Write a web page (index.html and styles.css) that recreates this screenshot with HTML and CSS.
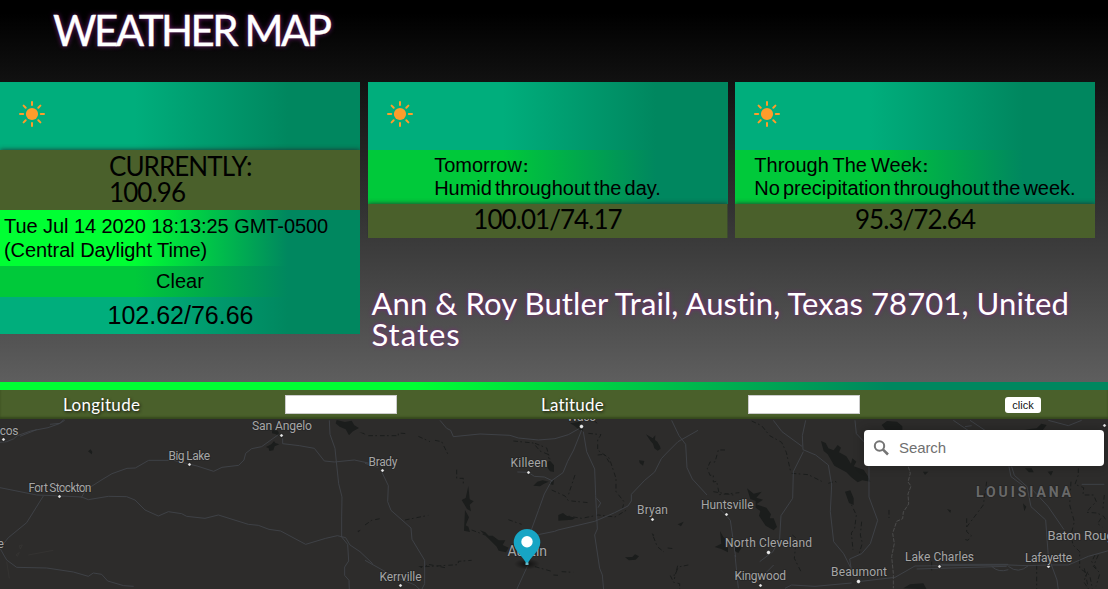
FILE: index.html
```html
<!DOCTYPE html>
<html lang="en">
<head>
<meta charset="utf-8">
<title>Weather Map</title>
<link rel="stylesheet" href="styles.css">
</head>
<body>
<svg width="0" height="0" class="defs">
  <symbol id="sun" viewBox="0 0 26 26">
    <circle cx="13" cy="13" r="6.1" fill="#ff9c2b"/>
    <path d="M13 1v3M13 22v3M1 13h3.2M21.800 13H25M4.600 4.600l2.100 2.100M19.300 19.300l2.100 2.100M21.400 4.600l-2.100 2.100M6.700 19.300l-2.100 2.100" stroke="#ff9c2b" stroke-width="2" stroke-linecap="round"/>
  </symbol>
</svg>
<header class="title-bar"><h1>WEATHER MAP</h1></header>
<main class="forecast">
  <section class="card current">
    <div class="icon-row"><svg class="sun"><use href="#sun"/></svg></div>
    <div class="olive now"><p><span class="now-label">CURRENTLY:</span><br><span class="now-temp">100.96</span></p></div>
    <div class="date">Tue Jul 14 2020 18:13:25 GMT-0500 (Central Daylight Time)</div>
    <div class="summary">Clear</div>
    <div class="range">102.62/76.66</div>
  </section>
  <section class="card">
    <div class="icon-row"><svg class="sun"><use href="#sun"/></svg></div>
    <div class="outlook"><p>Tomorrow<span class="colon">:</span><br><span class="line">Humid throughout the day.</span></p></div>
    <div class="olive temps">100.01/74.17</div>
  </section>
  <section class="card">
    <div class="icon-row"><svg class="sun"><use href="#sun"/></svg></div>
    <div class="outlook"><p>Through The Week<span class="colon">:</span><br><span class="line">No precipitation throughout the week.</span></p></div>
    <div class="olive temps">95.3/72.64</div>
  </section>
  <h2 class="address"><span class="addr1">Ann &amp; Roy Butler Trail, Austin, Texas 78701, United</span> <span class="addr2">States</span></h2>
</main>
<div class="stripe"></div>
<form class="coords">
  <label class="lon" for="lon">Longitude</label><input id="lon" type="text">
  <label class="lat" for="lat">Latitude</label><input id="lat" type="text">
  <button type="button">click</button>
</form>
<div class="map">
  <svg class="tiles" viewBox="0 419 1108 170">
    <g transform="translate(0 375) scale(.33333)">
      <g class="water">
        <path d="M1010 135l25 6 20-4 8 14 14 8-18 10-12 12-10-18-18-8-12-10zM1078 172l14 2 4 5zM816 166l12-3 8 8 0 12-10-6-10-2zM798 216l16-8 8-10 4 6 12 4-14 6-4 12-12 2-2-8zM264 229l8-6 5 8-2 7zM1072 468l10-4-6 8z"/>
      </g>
      <g class="road">
        <path d="M0 202l20-2 20-8 12-10 40-14 52-10 34-12 16-10M60 184l50-20M150 148l30-3 12-12M0 338l60 12 50 10 75 3 60 3 20 8 60-10 55 1 25 10 30 30 40 18 30-13 40 6 15 8 55 6 40-10 90 28 30 3 32 12 35 5 75 40 60-18 35-8 25 6 13 22 30 20 38 36M244 368l12-22 50-32 30-18 45-16 25-1 40-23 75 0 70 17 50 16 25-12 50-6 16-16 5-20 18-14 30-6 50-36M848 190l0 16 50 6 45 8 30 38 30 3 60-6 46 10M988 136l2 42 15 42 4 40 7 66 10 40-1 60 0 60 18 22 3 50-12 18 0 25 13 15 2 60M130 363l-50 80-55 45-25 32 20 35 30 22 90 2 80 12 45 13 15-10 25 4 18 20 48 14 30 2"/>
      </g>
      <path class="faint" d="M20 560l8 50M58 512l9-2-6 12zM48 540l10-8-6 12zM85 540l75-14"/>
    </g>
    <g transform="translate(365 375) scale(.33333)">
      <g class="water">
        <path d="M615 145l30-5 12 14-5 14-12-6-12-10zM843 178l14 8 6 4 8-9-1 14 7 5 8 14 2 7-9 6-10-7-4-14-8-9zM822 256l16 2-4 14-10-8zM545 262l10-5 12 14 0 20-12-2-7-10zM505 332l12-12 16-4 18 4-14 6-12 8zM552 326l15-12-2 16zM290 375l12-6 8-36 4 40 12 6-12 10 4 20-12-7-7-12zM300 405l12 22-10 24 8 4 5 16-18-4zM345 466l16 6 10 10 12 0 18 14 20 0-8 14 18 8-8 14-22-5-6-12-24-24zM580 420l14-6 10 8 28 6-10 6-42 3zM780 547l22-1 8-8 12 6-10 10-20 2zM938 448l18-8-8 14zM1065 468l10 18 14 12 0 34-20-10-20-6 20-10zM160 574l14-1-4 6zM860 474l8 6-4 4z"/>
      </g>
      <path class="creek" d="M10 182l70 0 20 0 0-8 25 2M160 184l35 16M210 196l20 4 10 20 10 20M275 284l0 26 20 0 0 20M0 450l20-14 30-6M120 435l70-14M445 198l60 6 20 24 24 10 6 28M510 205l35 14 10 34M560 345l40 18 10 14 60 6M590 420l60 10 50-10 50 6 40-24M686 136l12 10M670 175l38 4-10 16 0 30 35 25 20 60 0 40 24 30-4 20M698 240l20-2 15 24M1080 225l-20 0-10 36-15 0-8 20 8 20 10 0 0 20 10-2 8 40 60-6M1045 350l60 10M240 578l-50-10-10 6M320 465l40 15M180 575l100-6 0-10 40-3M865 485l12 30 20 16M908 519l18 2M510 575l50 14M590 590l35 2M565 600l16 1M938 572l-10 40M970 570l-30 6-10 24-14 2 10 20 18 4 0 18M430 434l40 14M630 300l-20 60"/>
      <g class="road">
        <path d="M225 136l20 24 12 6 8 19 80-8 90 4 25 8 60 6 50-4 40-12 32-18M650 165l-24 60-18 34-14 34-34 24-22 40-18 50-20 55 0 40M655 170l10 60 24 52 3 80 5 100-8 18 15 100 8 20 4 46M457 291l33 1 18 12 30 2 25 12M500 490l24-12 45-9 10-4 110-26 60-26 40-20 10-15 0-20 40-42 30-25 20-40 16-17 34-34 60-34M920 136l22 46 20 26 4 70 16 34 44 48M1050 388l34 34 12 14 16 110M50 290l20 42-2 48 10 26 60 53 3 34 38 63 0 70-9 18M0 556l90 50 60 24 15 14M488 572l-33 72M695 370l12 14-8 14M0 265l40 12"/>
      </g>
    </g>
    <g transform="translate(735 375) scale(.33333)">
      <g class="water">
        <path d="M258 198l14 6 8 16 16 6 12-16 10 8-6 14 22 12 14 22 4-16 12 10-8 14 30 10 12 18 8 18-24-4-14 6-20-16-14-14-36-20-20-34-12-10zM440 150l16-12 30 2 16 14 0 12-50 0zM865 166l20-4 20-2 14-14 16 4-12 16zM36 340l20 16 24-6-16 18 20 6-20 14 30 10 14 20-4 12 12 0 10 26-10 10-24-14-20-30 4-14-14-10 0-20-16-6zM330 350l16-4 10 24 0 20-14-6zM870 280l20 0 6 12-14 0zM938 290l16-2-6 14zM636 402l12 4-2 8zM864 385l10 10-6 14zM505 640l20-12 40-3 10 18zM0 500l22 14-12 20-10-6zM564 290l16 0-10 10z"/>
      </g>
      <path class="creek" d="M50 138l30 14 24 30 36 20 14 30 12 54M170 295l50 4 40 20M280 325l20-6 10 6M340 370l24 50-5 40-10 14 5 50M380 440l-4 40 6 24-10 34M462 405l0 24M695 430l0 40 14 12-10 14-14-4M755 320l-10 70-50 66M1030 280l0 20-10 28 26 10-2 22 32 0 8 20-20 20-8 12 30 2 20 10 6 10M1008 320l-4 70 14 50-10 40 6 30 20 20 0 50 30 20 10 50M1108 360l-4 40M1098 430l-10 16 14 10M1080 540l-10 20 14 20M1048 580l10 50M172 480l12 10-6 60 20 40M590 560l0 30M905 570l0 74M1090 540l-15 34 20 20-12 40M1058 590l-12 30 16 24"/>
      <g class="road">
        <path d="M115 136l26 34 60 44M212 136l-10 46 2 42 38 16 38 30 10 60-4 80 10 90 30 36 20 40M205 230l-30 60-2 80-35 52-4 68-20 40-40 30M360 136l4 40 38 40 0 150 26 70-22 70-26 30-36 16 6 40M370 620l110-13 60-34 280-3 60 2 60-2 60 0 60-26 82-23M545 582l270-8M610 568l210 0M820 574q30 24 60-2M770 574q20 20 50 10M830 275l8 26 38 34 12 60 44 40 8 110 26 70 4 30M822 275l6 30 46 34M885 336l54 58 48 70M150 640l20-10 70 4 110-10M655 136l44 30M705 136l45 30M690 155l20-3M1040 328l68 0M940 136l60 16 40-16M0 540l10 100M66 620l50-50"/>
      </g>
      <path class="border" d="M520 275l6 20-7 26 9 12-9 24 2 30-16 24-2 20-18 8-12 36 5 30-8 40 5 50 0 45"/>
    </g>
    <g class="towns">
      <circle cx="3.500" cy="439.500" r="1.800"/><circle cx="59.500" cy="496.500" r="1.800"/><circle cx="189.500" cy="464.500" r="1.800"/><circle cx="281.500" cy="435.500" r="1.800"/><circle cx="382.500" cy="470.500" r="1.800"/><circle cx="528.500" cy="472.500" r="1.800"/><circle cx="581.500" cy="426.500" r="2.200"/><circle cx="652.500" cy="519.500" r="1.800"/><circle cx="726.500" cy="514.500" r="1.800"/><circle cx="768.500" cy="552.500" r="2.200"/><circle cx="760.500" cy="585.500" r="1.800"/><circle cx="858.500" cy="581.500" r="2.200"/><circle cx="939.500" cy="566.500" r="1.800"/><circle cx="1048.500" cy="566.500" r="1.800"/><circle cx="1104.500" cy="425.500" r="1.800"/><circle cx="400.500" cy="585.500" r="1.800"/>
    </g>
    <g class="labels">
      <text x="-6.500" y="435" textLength="25">ecos</text>
      <text x="252" y="430" font-size="12.200" textLength="60">San Angelo</text>
      <text x="168.500" y="460" textLength="41.500">Big Lake</text>
      <text x="28.500" y="491.500" textLength="63">Fort Stockton</text>
      <text x="-2.500" y="548">e</text>
      <text x="368.500" y="466" textLength="29">Brady</text>
      <text x="510.500" y="467" textLength="37">Killeen</text>
      <text x="567" y="421" textLength="29">Waco</text>
      <text x="637" y="514" textLength="31">Bryan</text>
      <text x="701" y="509" textLength="52.500">Huntsville</text>
      <text class="city" x="507.500" y="555.500" textLength="39.500">Austin</text>
      <text x="379.500" y="580.500" textLength="42">Kerrville</text>
      <text x="725" y="546.500" textLength="87">North Cleveland</text>
      <text x="734.500" y="580" textLength="51.500">Kingwood</text>
      <text x="831" y="576" textLength="56">Beaumont</text>
      <text x="905" y="561" textLength="69">Lake Charles</text>
      <text x="1025" y="561.500" textLength="47">Lafayette</text>
      <text class="mid" x="1047.500" y="540" textLength="73">Baton Rouge</text>
      <text class="state" x="976" y="496.500" textLength="95">LOUISIANA</text>
    </g>
  </svg>
  <svg class="pin" viewBox="0 0 40 46">
    <defs><radialGradient id="shade"><stop offset="0" stop-color="#000" stop-opacity=".65"/><stop offset="1" stop-color="#000" stop-opacity="0"/></radialGradient></defs>
    <ellipse cx="20" cy="37" rx="13" ry="5.500" fill="url(#shade)"/>
    <path d="M20 37.800C17 30 6.700 23.700 6.700 15.400a13.300 13.300 0 0 1 26.600 0C33.300 23.700 23 30 20 37.800z" fill="#17a5c4"/>
    <circle cx="20" cy="14.700" r="5.700" fill="#fff"/>
    <rect x="18.500" y="35.500" width="3" height="2.500" fill="#69b8c8"/>
  </svg>
  <label class="search">
    <svg viewBox="0 0 18 18"><circle cx="6.500" cy="7" r="4.700" fill="none" stroke="#757575" stroke-width="2"/><path d="M9.800 10.300l5.200 5.200" stroke="#757575" stroke-width="2.600"/></svg>
    <input type="text" placeholder="Search">
  </label>
</div>
</body>
</html>
```
FILE: styles.css
```css
* { box-sizing: border-box; }
body {
  margin: 0;
  height: 589px;
  overflow: hidden;
  background: linear-gradient(#000 13px, #5e5e5e 382px);
  font-family: "Liberation Sans", Arial, sans-serif;
  color: #000;
}
h1, h2, p { margin: 0; }
.defs { display: block; }
.title-bar { height: 82px; padding: 5px 0 0 53px; }
h1 {
  font: 400 42px/50px Lato, sans-serif;
  letter-spacing: -2.500px;
  color: #fff;
  -webkit-text-stroke: .4px #fff;
  text-shadow: 0 0 5px #802080;
  white-space: nowrap;
}
.forecast {
  height: 300px;
  display: grid;
  grid-template: 156px 1fr / 360px 360px 360px;
  column-gap: 7.500px;
  align-items: start;
}
.card { display: flex; flex-direction: column; }
.current { grid-row: 1 / 3; }
.icon-row {
  height: 68px;
  padding: 19px;
  background: linear-gradient(90deg, #00ae7c 37.500%, #00875f 80%);
}
.sun { display: block; width: 26px; height: 26px; }
.olive {
  background: #4a602b;
  box-shadow: 0 0 5px #203030;
  clip-path: inset(-6px 0 0 0);
  font-family: Lato, sans-serif;
}
.now { height: 60px; padding: 3px 0 0 109px; font-size: 26px; line-height: 26px; }
.now-label { letter-spacing: -.95px; }
.now-temp { letter-spacing: -.9px; }
.date {
  height: 56px;
  padding: 4px 4px 0;
  font-size: 20px;
  line-height: 24px;
  letter-spacing: -.06px;
  background: linear-gradient(90deg, #00ff33 37.500%, #00875f 80%);
}
.summary {
  height: 31px;
  font-size: 20px;
  line-height: 31px;
  text-align: center;
  background: linear-gradient(90deg, #00c93a 37.500%, #00875f 80%);
}
.range {
  height: 37px;
  padding-left: 1px;
  font-size: 25px;
  line-height: 37px;
  text-align: center;
  background: linear-gradient(90deg, #00ae7c 37.500%, #00875f 80%);
}
.outlook {
  height: 54px;
  padding-top: 4px;
  display: flex;
  justify-content: center;
  font-size: 20px;
  line-height: 23px;
  white-space: nowrap;
  background: linear-gradient(90deg, #00c93a 37.500%, #00875f 80%);
}
.outlook p { word-spacing: -1.500px; }
.outlook .line { word-spacing: -2.500px; }
.colon { font-weight: 700; font-size: 16px; line-height: 1; margin-left: 1px; }
.temps { height: 34px; font-size: 26px; line-height: 31px; text-align: center; letter-spacing: -.95px; }
.address {
  grid-column: 2 / 4;
  padding: 50px 0 0 4px;
  font: 400 31px/31px Lato, sans-serif;
  color: #fff;
  text-shadow: 0 0 4px #802080;
}
.addr1 { letter-spacing: .1px; white-space: nowrap; }
.addr2 { letter-spacing: 1px; }
.stripe { height: 8px; background: linear-gradient(90deg, #00ff33 37.500%, #00875f 80%); }
.coords {
  height: 29px;
  position: relative;
  z-index: 1;
  display: flex;
  align-items: center;
  background: #4a602b;
  box-shadow: inset 0 -2px 2px #35481d;
  color: #fff;
  font: 17px Lato, sans-serif;
}
.coords label { letter-spacing: .35px; text-shadow: 1px 1px 3px #111; }
.coords .lon { width: 285px; padding-left: 63px; }
.coords .lat { width: 351px; padding-left: 144px; letter-spacing: .2px; }
.coords input { width: 112px; height: 19px; padding: 0; border: 1px solid #ccc; background: #fff; }
.coords button {
  width: 36px;
  height: 16px;
  margin-left: 145px;
  padding: 0;
  border: 0;
  border-radius: 3px;
  background: #fff;
  font: 11px/16px "Liberation Sans", sans-serif;
  color: #111;
}
.map { position: relative; height: 170px; background: #2d2c2b; }
.tiles { display: block; width: 1108px; height: 170px; }
.water { fill: #1b1d1c; }
.creek { fill: none; stroke: #1b1d1c; stroke-width: 3; stroke-dasharray: 14 7 5 9; }
.road { fill: none; stroke: #41444a; stroke-width: 2.600; stroke-linejoin: round; }
.faint { fill: none; stroke: #383635; stroke-width: 2; }
.border { fill: none; stroke: #4b4b4b; stroke-width: 3; stroke-dasharray: 12 4; }
.towns { fill: #e8e8e8; stroke: #171717; stroke-width: .8; }
.labels { font-family: Roboto, sans-serif; font-size: 12px; fill: #a5a5a5; stroke: #252525; stroke-width: 1.500px; paint-order: stroke; }
.labels .state { font-size: 14px; font-weight: 700; fill: #696969; }
.labels .city { font-size: 14px; }
.labels .mid { font-size: 13px; }
.pin { position: absolute; left: 507px; top: 108px; width: 40px; height: 46px; }
.search {
  position: absolute;
  top: 11px;
  right: 4px;
  width: 240px;
  height: 36px;
  display: flex;
  align-items: center;
  border-radius: 4px;
  background: #fff;
  box-shadow: 0 0 10px 2px rgba(0, 0, 0, .2);
}
.search svg { width: 18px; height: 18px; margin: 0 8px 0 9px; }
.search input { width: 190px; padding: 0 0 1px; border: 0; font: 15px "Liberation Sans", sans-serif; letter-spacing: -.1px; }
.search input::placeholder { color: #707070; }
```
